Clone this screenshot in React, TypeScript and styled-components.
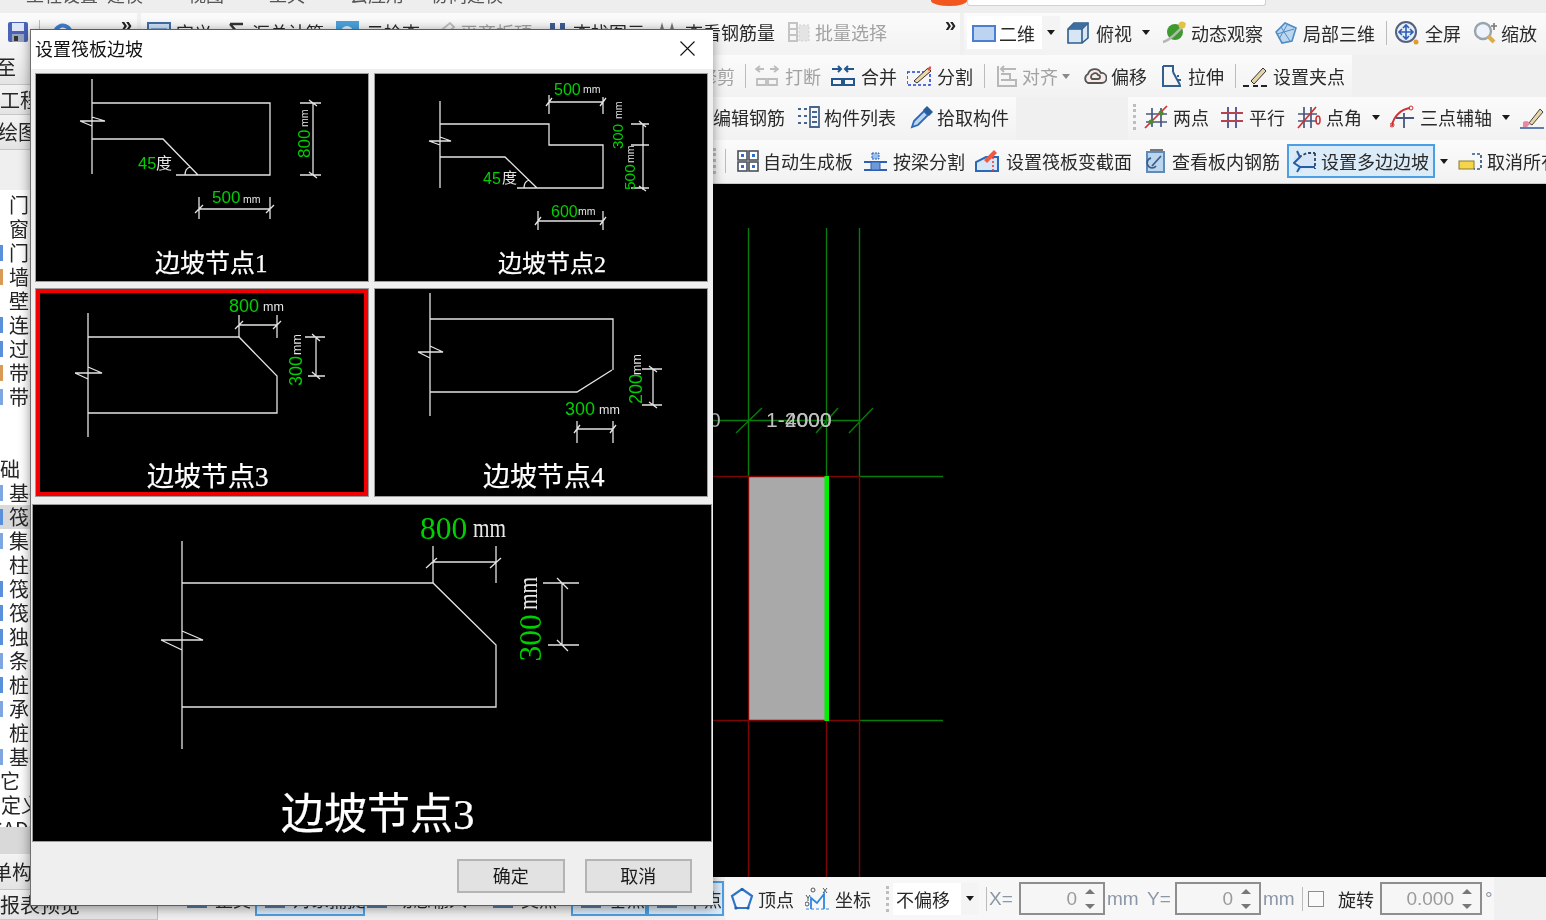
import React from "react";
import styled, { createGlobalStyle, css } from "styled-components";

const Global = createGlobalStyle`
  html, body { margin: 0; padding: 0; background: #f0f0f0; overflow: hidden; }
  * { box-sizing: border-box; }
`;

const CJK = `"Noto Sans CJK SC", "Liberation Sans", sans-serif`;
const SERIF = `"Liberation Serif", "Noto Sans CJK SC", serif`;
const SANS = `"Liberation Sans", "Noto Sans CJK SC", sans-serif`;

const Shell = styled.div`
  position: relative;
  width: 1546px;
  height: 920px;
  overflow: hidden;
  background: #f0f0f0;
  font-family: ${CJK};
  font-size: 18px;
  color: #262626;
  display: grid;
  grid-template-rows: 13px 42px 865px;
  filter: blur(0.35px);
`;

const TopStrip = styled.div`
  display: flex;
  align-items: flex-start;
  overflow: hidden;
  background: #eeeeee;
  padding-left: 26px;
`;
const Menu = styled.span`
  width: 81px;
  line-height: 18px;
  margin-top: -15px;
  color: #555;
  flex: none;
`;
const Blob = styled.div`
  flex: none;
  width: 36px;
  height: 6px;
  margin-left: auto;
  background: #f0561d;
  border-radius: 0 0 20px 22px / 0 0 6px 6px;
`;
const Search = styled.div`
  flex: none;
  width: 299px;
  height: 6px;
  margin-right: 284px;
  background: #fff;
  border: 1px solid #c5d3e6;
  border-top: 0;
  border-radius: 0 0 3px 3px;
`;

const TopBar = styled.div`
  display: flex;
  background: #f0f0f0;
`;
const Group = styled.div<{ $w?: number; $pl?: number; $ml?: number; $pb?: number }>`
  display: flex;
  align-items: center;
  height: 100%;
  flex: none;
  ${(p) => (p.$w ? `width: ${p.$w}px;` : "")}
  padding-left: ${(p) => p.$pl ?? 0}px;
  padding-bottom: ${(p) => p.$pb ?? 0}px;
  margin-left: ${(p) => p.$ml ?? 0}px;
  background: linear-gradient(#fbfbfb, #f2f2f2);
  white-space: nowrap;
`;

const Body = styled.div`
  display: grid;
  grid-template-columns: 158px 1388px;
  min-height: 0;
`;

/* ---------- sidebar ---------- */
const Sidebar = styled.aside`
  display: flex;
  flex-direction: column;
  background: #ececec;
  border-right: 1px solid #bdbdbd;
  overflow: hidden;
`;
const NavRow = styled.div<{ $h: number; $indent?: number; $pb?: number }>`
  height: ${(p) => p.$h}px;
  flex: none;
  padding-bottom: ${(p) => p.$pb ?? 0}px;
  line-height: ${(p) => p.$h - (p.$pb ?? 0) - 1}px;
  text-indent: ${(p) => p.$indent ?? 0}px;
  border-bottom: 1px solid #c6c6c6;
  background: linear-gradient(#f3f3f3, #e4e4e4);
  white-space: nowrap;
  font-size: 20px;
`;
const GapBand = styled.div<{ $h: number; $dark?: boolean }>`
  height: ${(p) => p.$h}px;
  flex: none;
  background: ${(p) => (p.$dark ? "#d9d9d9" : "#efefef")};
`;
const TreeList = styled.div`
  height: 637px;
  flex: none;
  padding-top: 3px;
  background: #fff;
  overflow: hidden;
`;
const TreeRow = styled.div<{ $sel?: boolean; $head?: boolean; $tip?: string }>`
  height: 24px;
  display: flex;
  align-items: center;
  white-space: nowrap;
  font-size: 20px;
  line-height: 24px;
  padding-left: ${(p) => (p.$head ? 0 : 9)}px;
  background: ${(p) => (p.$sel ? "#d9d9d9" : "transparent")};
  ${(p) =>
    p.$tip
      ? `background-image: linear-gradient(${p.$tip}, ${p.$tip}); background-size: 3px 16px; background-position: 0 4px; background-repeat: no-repeat;`
      : ""}
`;
const HeadLabel = styled.span<{ $shift: number }>`
  margin-left: ${(p) => p.$shift}px;
`;

/* ---------- toolbars ---------- */
const Main = styled.main`
  display: grid;
  grid-template-rows: 42px 43px 44px 693px 43px;
  min-width: 0;
  overflow: hidden;
`;
const ToolRow = styled.div<{ $pl?: number; $line?: boolean }>`
  display: flex;
  align-items: center;
  overflow: hidden;
  ${(p) => (p.$line ? "border-bottom: 1px solid #c9c9c9;" : "")}
`;
const Tool = styled.div<{ $w?: number; $iw?: number; $off?: boolean }>`
  display: flex;
  flex: none;
  align-items: center;
  width: ${(p) => p.$w ?? 80}px;
  height: 100%;
  white-space: nowrap;
  color: ${(p) => (p.$off ? "#a2a2a2" : "#2a2a2a")};
  & > svg { flex: none; width: 24px; height: 24px; margin-right: ${(p) => (p.$iw ?? 30) - 24}px; }
`;
const ActiveTool = styled(Tool)`
  height: 34px;
  border: 2px solid #4b9fe4;
  background: #dcebf8;
  padding-left: 4px;
`;
const StatusActive = styled(Tool)`
  height: 35px;
  border: 2px solid #4b9fe4;
  background: #dcebf8;
  padding-left: 6px;
`;
const Caret = styled.i<{ $ml?: number; $soft?: boolean }>`
  flex: none;
  width: 0;
  height: 0;
  margin-left: ${(p) => p.$ml ?? 10}px;
  border-left: 4.5px solid transparent;
  border-right: 4.5px solid transparent;
  border-top: 5px solid ${(p) => (p.$soft ? "#8a8a8a" : "#1a1a1a")};
`;
const Sep = styled.i<{ $ml?: number; $mr?: number }>`
  flex: none;
  width: 1px;
  height: 24px;
  background: #bcbcbc;
  margin-left: ${(p) => p.$ml ?? 0}px;
  margin-right: ${(p) => p.$mr ?? 0}px;
`;
const Grip = styled.i<{ $ml?: number; $mr?: number }>`
  flex: none;
  width: 3px;
  height: 26px;
  border-left: 3px dotted #bdbdbd;
  margin-left: ${(p) => p.$ml ?? 0}px;
  margin-right: ${(p) => p.$mr ?? 0}px;
`;
const More = styled.span<{ $ml?: number }>`
  font-family: ${SANS};
  font-weight: 700;
  font-size: 20px;
  line-height: 14px;
  align-self: flex-start;
  margin-top: 4px;
  margin-left: ${(p) => p.$ml ?? 0}px;
  color: #222;
`;
const WhiteBox = styled.div`
  display: flex;
  align-items: center;
  height: 33px;
  padding-left: 5px;
  margin-right: 6px;
  background: #fff;
`;
const CaretCell = styled.div`
  width: 18px;
  height: 100%;
  display: flex;
  align-items: center;
  justify-content: center;
  background: #f4f4f4;
  & > i { margin-left: 0; }
`;

/* ---------- canvas ---------- */
const CanvasWrap = styled.section`
  background: #000;
  overflow: hidden;
  min-height: 0;
`;
const CanvasSvg = styled.svg`
  display: block;
  width: 100%;
  height: 100%;
`;
const CanvasText = styled.text`
  font-family: ${SANS};
  font-size: 21px;
  fill: #c0c0c0;
`;

/* ---------- status bar ---------- */
const StatusBar = styled.footer`
  display: flex;
  align-items: center;
  padding-left: 27px;
  background: #f0f0f0;
  overflow: hidden;
`;
const StatusGroup = styled.div`
  display: flex;
  align-items: center;
  height: 100%;
  background: #f7f7f7;
  padding-left: 5px;
  margin-left: 1px;
`;
const SelectBox = styled.div`
  display: flex;
  align-items: center;
  width: 86px;
  height: 32px;
  margin: 0 7px 0 2px;
  padding-left: 3px;
  background: #fff;
  white-space: nowrap;
`;
const SelectText = styled.span`
  flex: 1;
`;
const FieldLabel = styled.span<{ $w: number; $pl?: number }>`
  flex: none;
  width: ${(p) => p.$w}px;
  padding-left: ${(p) => p.$pl ?? 0}px;
  font-family: ${SANS};
  font-size: 19px;
  color: #8b97a6;
  white-space: nowrap;
`;
const Field = styled.div<{ $w: number }>`
  flex: none;
  display: flex;
  align-items: center;
  justify-content: flex-end;
  width: ${(p) => p.$w}px;
  height: 33px;
  border: 2px solid #8e8e8e;
  background: #f6f6f6;
  font-family: ${SANS};
  font-size: 19px;
  color: #9a9a9a;
`;
const Spin = styled.div`
  flex: none;
  width: 26px;
  height: 100%;
  display: flex;
  flex-direction: column;
  justify-content: space-between;
  align-items: center;
  padding: 5px 0 4px;
`;
const SpinArrow = styled.i<{ $down?: boolean }>`
  width: 0;
  height: 0;
  border-left: 5px solid transparent;
  border-right: 5px solid transparent;
  ${(p) =>
    p.$down
      ? css`border-top: 5px solid #777;`
      : css`border-bottom: 5px solid #777;`}
`;
const Check = styled.i`
  flex: none;
  width: 16px;
  height: 16px;
  border: 1px solid #8e8e8e;
  background: #fafafa;
  margin-right: 14px;
`;
const PlainLabel = styled.span<{ $w: number }>`
  flex: none;
  width: ${(p) => p.$w}px;
`;

/* ---------- dialog ---------- */
const Dialog = styled.div`
  position: absolute;
  left: 30px;
  top: 29px;
  width: 683px;
  height: 877px;
  display: flex;
  flex-direction: column;
  background: #efefef;
  border-top: 1px solid #5c5c5c;
  border-left: 1px solid #6f6f6f;
  border-bottom: 1px solid #5c5c5c;
  box-shadow: 0 2px 11px rgba(0, 0, 0, 0.42);
`;
const DialogTitle = styled.div`
  height: 39px;
  flex: none;
  display: flex;
  align-items: center;
  justify-content: space-between;
  padding: 0 18px 4px 4px;
  background: #fff;
  color: #111;
  font-size: 18px;
`;
const CloseIcon = styled.svg`
  width: 15px;
  height: 15px;
  margin-top: 2px;
`;
const ThumbGrid = styled.div`
  display: grid;
  grid-template-columns: 334px 334px;
  grid-template-rows: 209px 209px;
  column-gap: 5px;
  row-gap: 6px;
  margin: 4px 0 0 4px;
`;
const Frame = styled.div`
  border: 1px solid #9c9c9c;
  background: #000;
`;
const PreviewFrame = styled(Frame)`
  width: 680px;
  height: 338px;
  flex: none;
  margin: 7px 0 0 1px;
`;
const Drawing = styled.svg<{ $sel?: boolean }>`
  display: block;
  width: 100%;
  height: 100%;
  background: #000;
  ${(p) => (p.$sel ? "outline: 4px solid #f00000; outline-offset: -4px;" : "")}
`;
const Footer = styled.div`
  flex: 1;
  display: flex;
  justify-content: flex-end;
  align-items: flex-start;
  gap: 20px;
  padding: 17px 21px 0 0;
`;
const DlgButton = styled.button`
  width: 107.5px;
  height: 34px;
  padding: 0 0 2px;
  border: 2px solid #b4b4b4;
  background: #e2e2e2;
  font: 18px ${CJK};
  color: #1a1a1a;
`;
const Green = styled.text<{ $s: number; $serif?: boolean }>`
  font-family: ${(p) => (p.$serif ? SERIF : SANS)};
  font-size: ${(p) => p.$s}px;
  fill: #00d000;
`;
const Unit = styled.text<{ $s: number; $serif?: boolean }>`
  font-family: ${(p) => (p.$serif ? SERIF : SANS)};
  font-size: ${(p) => p.$s}px;
  fill: #e6e6e6;
`;
const Title = styled.text<{ $s: number }>`
  font-family: ${SERIF};
  font-size: ${(p) => p.$s}px;
  fill: #fff;
  stroke: #fff;
  stroke-width: 0.25;
`;
const Ink = styled.path`
  fill: none;
  stroke: #e4e4e4;
  stroke-width: 1.3;
`;

/* ---------- icons ---------- */
type IconName =
  | "save" | "undo" | "def" | "sum" | "cloudbox" | "pen" | "find" | "rebar" | "batch" | "rect" | "cube"
  | "orbit" | "hex" | "fit" | "zoom" | "break" | "merge" | "split" | "align" | "cloud" | "stretch"
  | "pencil" | "list" | "picker" | "two" | "par" | "ang" | "arc" | "brush" | "grid" | "beam" | "sec"
  | "view" | "poly" | "cancel" | "pent" | "coord" | "dim";

const icons: Record<IconName, React.ReactNode> = {
  save: <><rect x="2" y="2" width="20" height="20" rx="2" fill="#4a62b8" /><rect x="6" y="3" width="12" height="8" fill="#dfe6f5" /><rect x="6" y="14" width="12" height="8" fill="#9aa4bd" /><rect x="8" y="16" width="4" height="5" fill="#333" /></>,
  undo: <path d="M5 12a8 8 0 1 1 3 8" fill="none" stroke="#3f7fd0" strokeWidth="4" />,
  def: <><rect x="1" y="3" width="22" height="18" fill="#cfe0f3" stroke="#3f6ea8" strokeWidth="2" /><path d="M4 9h16M4 14h16" stroke="#3f6ea8" /></>,
  sum: <path d="M5 4h13M5 4l7 8-7 8h13" fill="none" stroke="#333" strokeWidth="2.4" />,
  cloudbox: <><rect x="1" y="1" width="23" height="22" fill="#4aa3dd" /><circle cx="12" cy="12" r="6" fill="#dff0fb" /></>,
  pen: <path d="M3 20l3-7L18 3l4 4L10 18z" fill="none" stroke="#c0c0c0" strokeWidth="2" />,
  find: <><circle cx="7" cy="15" r="5" fill="#5d7fb8" /><circle cx="17" cy="15" r="5" fill="#5d7fb8" /><rect x="5" y="3" width="5" height="9" fill="#3d5d98" /><rect x="15" y="3" width="5" height="9" fill="#3d5d98" /></>,
  rebar: <path d="M3 20l4-14 4 14M13 20l4-14 4 14" fill="none" stroke="#777" strokeWidth="2" />,
  batch: <><path d="M2 3h8v18H2zM2 9h8M2 15h8" fill="none" stroke="#c4c4c4" strokeWidth="2" /><path d="M12 5h10v16H12z" fill="#e4e4e4" stroke="#cfcfcf" strokeDasharray="2 2" /></>,
  rect: <><rect x="1" y="5" width="22" height="15" fill="#bcd3f2" stroke="#4a80cf" strokeWidth="2" /></>,
  cube: <><path d="M2 8l6-6h14v15l-6 5H2z" fill="#d7e6f5" stroke="#2f5c8a" strokeWidth="1.6" /><path d="M2 8h14v14M16 8l6-6" fill="none" stroke="#2f5c8a" strokeWidth="1.6" /><path d="M2 8l6-6h14l-6 6z" fill="#3f6e9e" /></>,
  orbit: <><circle cx="13" cy="11" r="8" fill="#3c9a2e" /><path d="M1 21C6 20 17 11 23 2" stroke="#b5b5b5" strokeWidth="2.5" fill="none" /><circle cx="20" cy="4" r="3.5" fill="#e3c244" /></>,
  hex: <><path d="M2 11l9-9 11 5-4 13-10 2z" fill="#bcd6f0" stroke="#4f8bc4" strokeWidth="1.6" /><path d="M7 6l9 14M13 4l-8 14M3 13l17-5" stroke="#4f8bc4" fill="none" /></>,
  fit: <><circle cx="11" cy="11" r="10" fill="#e8eefa" stroke="#54627d" strokeWidth="2" /><path d="M11 4v14M4 11h14M8 7l3-3 3 3M8 15l3 3 3-3M7 8l-3 3 3 3M15 8l3 3-3 3" stroke="#2c5fb5" strokeWidth="1.6" fill="none" /><circle cx="21" cy="21" r="2.5" fill="#e59a2f" /></>,
  zoom: <><circle cx="10" cy="10" r="8" fill="#eef3fb" stroke="#9aa4ad" strokeWidth="2.4" /><path d="M15 15l6 6" stroke="#d6ad55" strokeWidth="4" /><path d="M21 2v7M18 5h6" stroke="#777" strokeWidth="1.6" /></>,
  break: <path d="M1 5h8M5 2L1 5l4 3M23 5h-8M19 2l4 3-4 3M2 15h9v6H2zM13 15h9v6h-9z" fill="none" stroke="#bdbdbd" strokeWidth="1.8" />,
  merge: <path d="M1 5h9M7 2l3 3-3 3M23 5h-9M17 2l-3 3 3 3M1 15h10v6H1zM13 15h10v6H13z" fill="none" stroke="#23568f" strokeWidth="2" />,
  split: <><path d="M0 8h23v13H0z" fill="none" stroke="#2541d6" strokeWidth="1.6" strokeDasharray="3 2" /><path d="M7 17l14-13 3 3L10 19z" fill="#f0d9a8" stroke="#333" /><path d="M20 5l3-3 2 2-3 3z" fill="#d9534f" /></>,
  align: <path d="M3 2v20h18v-6H6M6 5h15M9 2L6 5l3 3M6 10h9v5" fill="none" stroke="#b8b8b8" strokeWidth="2" />,
  cloud: <path d="M5 19a5 5 0 0 1 0-9 7 7 0 0 1 13-1 5 5 0 0 1 1 10zM9 15a3 3 0 0 1 1-5 3 3 0 0 1 5 1 2 2 0 0 1 0 4z" fill="#f8ebe8" stroke="#555" strokeWidth="1.8" />,
  stretch: <path d="M4 2h10v6M4 2v20h18M14 8l7 13M18 12h2M19 16h3" fill="none" stroke="#325f92" strokeWidth="2" />,
  pencil: <><path d="M8 17L20 4l3 3L11 20z" fill="#e7d5a8" stroke="#333" /><path d="M0 22h6M10 22h5M18 22h6" stroke="#222" strokeWidth="2" /></>,
  list: <path d="M2 4h3M2 11h3M2 18h3M8 4h3M8 11h3M8 18h3M14 2h9v20h-9zM16 7h5M16 12h5M16 17h5" fill="none" stroke="#47658a" strokeWidth="1.8" />,
  picker: <><path d="M2 22l2-6L14 6l4 4L8 20z" fill="#b8d5f3" stroke="#2d68b8" strokeWidth="1.8" /><path d="M13 5l4-4 6 6-4 4z" fill="#2b5d9a" /></>,
  two: <><path d="M8 3v19M17 3v19M2 9h21M2 17h21" stroke="#47577e" strokeWidth="1.7" /><path d="M1 23L23 1" stroke="#d03030" strokeWidth="1.7" /><circle cx="7" cy="17" r="2.5" fill="#4a8a30" /><circle cx="17" cy="8" r="2.5" fill="#4a8a30" /></>,
  par: <><path d="M8 2v21M16 2v21" stroke="#5a5f9c" strokeWidth="2" fill="none" /><path d="M1 8h22M1 16h22" stroke="#b8434f" strokeWidth="2" fill="none" /></>,
  ang: <><path d="M7 2v21M14 2v21M1 9h19M1 16h19" stroke="#47577e" strokeWidth="1.7" /><path d="M1 23L19 2" stroke="#d03030" strokeWidth="1.7" /><ellipse cx="21" cy="15" rx="2" ry="4" fill="none" stroke="#d03030" strokeWidth="1.6" /></>,
  arc: <><path d="M2 21C3 12 11 4 20 3" fill="none" stroke="#d03030" strokeWidth="1.8" /><path d="M14 8v15M6 13h18" stroke="#47577e" strokeWidth="1.8" /><circle cx="21" cy="3" r="2" fill="none" stroke="#d03030" /><circle cx="2" cy="20" r="2" fill="none" stroke="#d03030" /></>,
  brush: <><path d="M9 18L20 4l3 3-11 13z" fill="#e7d5a8" stroke="#444" /><path d="M3 17c3-2 6-1 7 2l-3 3H3z" fill="#e58aa5" /><path d="M0 23h24" stroke="#3c5f9c" strokeWidth="1.6" /></>,
  grid: <><rect x="2" y="2" width="9" height="9" fill="#fff" stroke="#4a4f5a" strokeWidth="1.6" /><rect x="13" y="2" width="9" height="9" fill="#fff" stroke="#4a4f5a" strokeWidth="1.6" /><rect x="2" y="13" width="9" height="9" fill="#fff" stroke="#4a4f5a" strokeWidth="1.6" /><rect x="13" y="13" width="9" height="9" fill="#fff" stroke="#4a4f5a" strokeWidth="1.6" /><path d="M5 5h3v3H5zM16 5h3v3h-3zM5 16h3v3H5zM16 16h3v3h-3z" fill="#2f6fc9" /></>,
  beam: <><path d="M9 4h7v6H9z" fill="#9cc0ea" stroke="#2c5fb5" strokeDasharray="2 1" /><path d="M1 13h23M1 21h23" stroke="#2c5fb5" strokeWidth="2" /><rect x="8" y="13" width="9" height="8" fill="#6f9ad8" stroke="#2c5fb5" /></>,
  sec: <><path d="M1 22V13l10-5h12v14z" fill="#d7e7f7" stroke="#2c68b8" strokeWidth="2" /><path d="M9 11L19 1l3 3-10 10z" fill="#ef5a44" /><path d="M18 8v15" stroke="#e33" strokeDasharray="2 2" strokeWidth="1.5" /></>,
  view: <><path d="M4 3h17v20H4z" fill="#bcd5ee" stroke="#5f8bb6" strokeWidth="2" /><path d="M7 1h13" stroke="#777" strokeWidth="2" /><path d="M9 17l9-10M8 9a5 5 0 1 0 5 8" fill="none" stroke="#3a5f8a" strokeWidth="1.8" /></>,
  poly: <><path d="M4 3l2 5 16-4v16H8l2 4-8-4 4-6-6-4z" fill="#d5e5f6" /><path d="M6 8l8-4h8M22 4v16" fill="none" stroke="#30445f" strokeWidth="1.8" strokeDasharray="3 2" /><path d="M4 2l3 6-6 6 6 4-3 5M7 18h15" fill="none" stroke="#225ea8" strokeWidth="2" /></>,
  cancel: <><rect x="1" y="12" width="15" height="8" fill="#f5d54b" stroke="#8a7a2a" /><path d="M14 5h9v15h-7" fill="none" stroke="#30557f" strokeWidth="1.7" strokeDasharray="3 2" /></>,
  pent: <><path d="M12 2l10 7-4 12H6L2 9z" fill="#f4f8fd" stroke="#2f74c5" strokeWidth="2.2" /><circle cx="12" cy="2.5" r="1.6" fill="#1f5fae" /><circle cx="6" cy="21" r="1.6" fill="#1f5fae" /><circle cx="18" cy="21" r="1.6" fill="#1f5fae" /></>,
  coord: <><path d="M6 22V11l6 5 7-9v15" fill="none" stroke="#2d86e0" strokeWidth="1.8" /><path d="M1 22h23" stroke="#2d86e0" strokeDasharray="3 2" /><circle cx="8" cy="3" r="2" fill="none" stroke="#555" /><circle cx="2" cy="17" r="2" fill="none" stroke="#555" /><path d="M18 1l4 5M22 1l-4 5M1 8l2 3 2-3M3 11v3" stroke="#555" fill="none" /></>,
  dim: <path d="M3 4h18v16H3z" fill="none" stroke="#5f7ea3" strokeWidth="2" />,
};

const Icon = ({ name }: { name: IconName }) => <svg viewBox="0 0 24 24">{icons[name]}</svg>;

type T = { n: IconName; l?: string; w: number; iw: number; off?: boolean; caret?: boolean; softCaret?: boolean };
const renderTool = (t: T, i: number) => (
  <Tool key={i} $w={t.w} $iw={t.iw} $off={t.off}>
    <Icon name={t.n} />
    {t.l && <span>{t.l}</span>}
    {t.caret && <Caret />}
    {t.softCaret && <Caret $ml={4} $soft />}
  </Tool>
);

const row1a: T[] = [
  { n: "def", l: "定义", w: 78, iw: 29 },
  { n: "sum", l: "汇总计算", w: 110, iw: 27 },
  { n: "cloudbox", l: "云检查", w: 97, iw: 31 },
  { n: "pen", l: "平齐板顶", w: 113, iw: 28, off: true },
  { n: "find", l: "查找图元", w: 110, iw: 28 },
  { n: "rebar", l: "查看钢筋量", w: 132, iw: 30 },
  { n: "batch", l: "批量选择", w: 101, iw: 28, off: true },
];
const row1b: T[] = [
  { n: "cube", l: "俯视", w: 96, iw: 30, caret: true },
  { n: "orbit", l: "动态观察", w: 112, iw: 29 },
  { n: "hex", l: "局部三维", w: 112, iw: 29 },
];
const row1c: T[] = [
  { n: "fit", l: "全屏", w: 78, iw: 30 },
  { n: "zoom", l: "缩放", w: 72, iw: 28 },
];
const row2a: T[] = [
  { n: "dim", l: "删除", w: 99, iw: 30 },
  { n: "dim", l: "复制", w: 99, iw: 30 },
  { n: "dim", l: "移动", w: 99, iw: 30 },
  { n: "dim", l: "旋转", w: 99, iw: 30 },
  { n: "dim", l: "延伸", w: 99, iw: 30 },
  { n: "dim", l: "修剪", w: 76, iw: 30, off: true },
];
const row3a: T[] = [
  { n: "dim", l: "属性", w: 102, iw: 30 },
  { n: "dim", l: "图元", w: 102, iw: 30 },
  { n: "dim", l: "楼层", w: 102, iw: 30 },
  { n: "dim", l: "定义", w: 102, iw: 30 },
  { n: "dim", l: "绘制", w: 102, iw: 30 },
  { n: "dim", l: "编辑钢筋", w: 113, iw: 30 },
  { n: "list", l: "构件列表", w: 114, iw: 28 },
  { n: "picker", l: "拾取构件", w: 106, iw: 27 },
];
const row3b: T[] = [
  { n: "two", l: "两点", w: 76, iw: 29 },
  { n: "par", l: "平行", w: 77, iw: 29 },
  { n: "ang", l: "点角", w: 93, iw: 29, caret: true },
  { n: "arc", l: "三点辅轴", w: 130, iw: 30, caret: true },
  { n: "brush", w: 26, iw: 26 },
];
const row4a: T[] = [
  { n: "dim", l: "直线", w: 108, iw: 30 },
  { n: "dim", l: "点", w: 108, iw: 30 },
  { n: "dim", l: "矩形", w: 108, iw: 30 },
  { n: "dim", l: "智能布置", w: 108, iw: 30 },
  { n: "dim", l: "镜像", w: 108, iw: 30 },
];
const row4b: T[] = [
  { n: "grid", l: "自动生成板", w: 127, iw: 27 },
  { n: "beam", l: "按梁分割", w: 112, iw: 30 },
  { n: "sec", l: "设置筏板变截面", w: 168, iw: 31 },
  { n: "view", l: "查看板内钢筋", w: 144, iw: 29 },
];

const tree: { t: string; tip?: string; sel?: boolean; head?: number }[] = [
  { t: "门" }, { t: "窗" }, { t: "门联窗", tip: "#5a8fdc" }, { t: "墙洞", tip: "#d89a55" }, { t: "壁龛" },
  { t: "连梁", tip: "#5a8fdc" }, { t: "过梁", tip: "#5a8fdc" }, { t: "带形洞", tip: "#d89a55" }, { t: "带形窗", tip: "#7fa6e0" },
  { t: " " }, { t: " " },
  { t: "基础", head: -20 },
  { t: "基础梁", tip: "#7fa6e0" }, { t: "筏板基础", tip: "#5a8fdc", sel: true }, { t: "集水坑", tip: "#7fa6e0" },
  { t: "柱墩" }, { t: "筏板主筋", tip: "#5a8fdc" }, { t: "筏板负筋", tip: "#5a8fdc" }, { t: "独立基础", tip: "#5a8fdc" },
  { t: "条形基础", tip: "#7fa6e0" }, { t: "桩承台", tip: "#5a8fdc" }, { t: "承台梁", tip: "#7fa6e0" }, { t: "桩" },
  { t: "基础板带", tip: "#7fa6e0" },
  { t: "其它", head: -20 },
  { t: "自定义", head: -19 },
  { t: "CAD识别", head: -10 },
];

const Diagram1 = () => (
  <Drawing viewBox="36 74 332 207">
    <Ink d="M92 79V174M92 103H270V175H176M92 139H163L198 175M80 121H105L92 117M80 121L92 126M185 175C185 171 187 168 190 167" />
    <Ink d="M300 103H321M300 175H321M313 103V175M309 100L317 106M309 172L317 178M199 197V219M270 197V219M199 209H270M195 213L203 205M266 213L274 205" />
    <Green $s={16.5} x={138} y={169}>45</Green>
    <Unit $s={16} x={156} y={169} fontFamily={CJK}>度</Unit>
    <Green $s={17} x={212} y={203}>500</Green>
    <Unit $s={10.5} x={243} y={203}>mm</Unit>
    <Green $s={17} transform="translate(310 158) rotate(-90)">800</Green>
    <Unit $s={10.5} transform="translate(308 127) rotate(-90)">mm</Unit>
    <Title $s={25} x={155} y={272}>边坡节点1</Title>
  </Drawing>
);
const Diagram2 = () => (
  <Drawing viewBox="375 74 332 207">
    <Ink d="M440 101V188M440 124H549V145H603V188H517M440 157H505L537 188M429 141H451L440 137M429 141L440 145M524 188C524 184 526 181 529 180" />
    <Ink d="M549 95V114M603 97V114M549 102H603M546 106L552 98M600 106L606 98M631 124H649M631 145H649M631 188H649M643 124V190M639 121L646 127M639 186L646 191M538 211V230M603 211V230M538 221H603M535 225L541 217M600 225L606 217" />
    <Green $s={16} x={483} y={184}>45</Green>
    <Unit $s={15} x={502} y={183} fontFamily={CJK}>度</Unit>
    <Green $s={16} x={554} y={95}>500</Green>
    <Unit $s={10.5} x={583} y={93}>mm</Unit>
    <Green $s={16} x={551} y={217}>600</Green>
    <Unit $s={10.5} x={578} y={215}>mm</Unit>
    <Green $s={15} transform="translate(623 149) rotate(-90)">300</Green>
    <Unit $s={10.5} transform="translate(622 119) rotate(-90)">mm</Unit>
    <Green $s={15.5} transform="translate(635 190) rotate(-90)">500</Green>
    <Unit $s={10.5} transform="translate(634 163) rotate(-90)">mm</Unit>
    <Title $s={24} x={498} y={272}>边坡节点2</Title>
  </Drawing>
);
const Diagram3 = () => (
  <Drawing viewBox="36 289 332 207" $sel>
    <Ink d="M88 313V437M88 337H239L277 376V413H88M75 373H102L88 367M75 373L88 379" />
    <Ink d="M239 315V337M277 315V338M239 325H277M235 329L243 321M273 329L281 321M305 337H325M308 376H325M316 337V376M312 334L320 341M312 372L320 379" />
    <Green $s={18} x={229} y={312}>800</Green>
    <Unit $s={12.5} x={263} y={311}>mm</Unit>
    <Green $s={18} transform="translate(302 386) rotate(-90)">300</Green>
    <Unit $s={12.5} transform="translate(301 355) rotate(-90)">mm</Unit>
    <Title $s={27} x={147} y={486}>边坡节点3</Title>
  </Drawing>
);
const Diagram4 = () => (
  <Drawing viewBox="375 289 332 207">
    <Ink d="M430 293V416M430 319H613V370M612 370L577 392H430M418 352H443L430 346M418 352L430 358" />
    <Ink d="M642 369H662M642 405H662M653 369V405M649 366L657 372M649 402L657 408M577 421V443M613 421V443M577 429H613M574 433L580 425M610 433L616 425" />
    <Green $s={18} x={565} y={415}>300</Green>
    <Unit $s={12.5} x={599} y={414}>mm</Unit>
    <Green $s={18} transform="translate(642 404) rotate(-90)">200</Green>
    <Unit $s={12.5} transform="translate(641 375) rotate(-90)">mm</Unit>
    <Title $s={27} x={483} y={486}>边坡节点4</Title>
  </Drawing>
);
const Preview = () => (
  <Drawing viewBox="33 505 678 336">
    <Ink d="M182 541V749M182 583H433L496 645V707H182M161 640H203L182 631M161 640L182 650" />
    <Ink d="M433 546V583M496 546V583M433 562H496M426 568L437 558M490 568L501 558M543 583H579M548 645H579M562 583V645M557 578L568 589M557 640L568 651" />
    <Green $s={31.5} $serif x={420} y={539}>800</Green>
    <Unit $s={28} $serif x={473} y={537} textLength={33} lengthAdjust="spacingAndGlyphs">mm</Unit>
    <Green $s={31.5} $serif transform="translate(541 661.5) rotate(-90)">300</Green>
    <Unit $s={28} $serif transform="translate(537 610) rotate(-90)" textLength={33} lengthAdjust="spacingAndGlyphs">mm</Unit>
    <Title $s={43} x={281} y={829}>边坡节点3</Title>
  </Drawing>
);

const SpinBox = () => (
  <Spin>
    <SpinArrow />
    <SpinArrow $down />
  </Spin>
);

export default function App() {
  return (
    <>
      <Global />
      <Shell>
        <TopStrip>
          <Menu>工程设置</Menu>
          <Menu>建模</Menu>
          <Menu>视图</Menu>
          <Menu>工具</Menu>
          <Menu>云应用</Menu>
          <Menu>协同建模</Menu>
          <Blob />
          <Search />
        </TopStrip>

        <TopBar>
          <Group $w={137} $pl={6} $pb={4}>
            <Tool $w={33} $iw={24}><Icon name="save" /></Tool>
            <Sep $mr={10} />
            <Tool $w={71} $iw={24}><Icon name="undo" /></Tool>
            <More>»</More>
          </Group>
          <Group $w={819} $ml={4} $pl={6} $pb={4}>
            {row1a.map(renderTool)}
            <More $ml={57}>»</More>
          </Group>
          <Group $w={586} $ml={4} $pl={3} $pb={3}>
            <WhiteBox>
              <Tool $w={70} $iw={27}><Icon name="rect" /><span>二维</span></Tool>
              <CaretCell><Caret /></CaretCell>
            </WhiteBox>
            {row1b.map(renderTool)}
            <Sep $mr={8} />
            {row1c.map(renderTool)}
          </Group>
        </TopBar>

        <Body>
          <Sidebar>
            <NavRow $h={30} $indent={-4} $pb={5}>至</NavRow>
            <NavRow $h={30}>工程设置</NavRow>
            <NavRow $h={35} $indent={-2}>绘图输入</NavRow>
            <GapBand $h={40} />
            <TreeList>
              {tree.map((r, i) => (
                <TreeRow key={i} $sel={r.sel} $tip={r.tip} $head={r.head !== undefined}>
                  {r.head !== undefined ? <HeadLabel $shift={r.head}>{r.t}</HeadLabel> : r.t}
                </TreeRow>
              ))}
            </TreeList>
            <GapBand $h={27} $dark />
            <NavRow $h={36} $indent={-8}>单构件输入</NavRow>
            <NavRow $h={30}>报表预览</NavRow>
          </Sidebar>

          <Main>
            <ToolRow>
              <Group $pl={16}>
                {row2a.map(renderTool)}
                <Sep $mr={9} />
                {renderTool({ n: "break", l: "打断", w: 76, iw: 30, off: true }, 1)}
                {renderTool({ n: "merge", l: "合并", w: 76, iw: 30 }, 2)}
                {renderTool({ n: "split", l: "分割", w: 77, iw: 30 }, 3)}
                <Sep $mr={10} />
                {renderTool({ n: "align", l: "对齐", w: 88, iw: 27, off: true, softCaret: true }, 4)}
                {renderTool({ n: "cloud", l: "偏移", w: 76, iw: 28 }, 5)}
                {renderTool({ n: "stretch", l: "拉伸", w: 76, iw: 29 }, 6)}
                <Sep $mr={7} />
                {renderTool({ n: "pencil", l: "设置夹点", w: 109, iw: 30 }, 7)}
              </Group>
            </ToolRow>

            <ToolRow>
              <Group $pl={15} $pb={3}>{row3a.map(renderTool)}</Group>
              <Group $ml={112} $w={418} $pl={5} $pb={3}>
                <Grip $mr={8} />
                {row3b.map(renderTool)}
              </Group>
            </ToolRow>

            <ToolRow $line>
              <Group $w={1388} $pl={14} $pb={1}>
                {row4a.map(renderTool)}
                <Grip $ml={1} $mr={9} />
                <Sep $mr={10} />
                {row4b.map(renderTool)}
                <ActiveTool $w={148} $iw={28}>
                  <Icon name="poly" />
                  <span>设置多边边坡</span>
                </ActiveTool>
                <Tool $w={23} $iw={0}><Caret $ml={5} /></Tool>
                {renderTool({ n: "cancel", l: "取消所有图元", w: 140, iw: 29 }, 9)}
              </Group>
            </ToolRow>

            <CanvasWrap>
              <CanvasSvg viewBox="158 184 1388 693">
                <path d="M748.5 228V476M826.5 228V476M859.5 228V476M700 420.5H860M736 433L762 408M816 433L838 408M849 433L873 408M860 476.5H943M860 720.5H943" stroke="#087c08" strokeWidth="1.4" fill="none" />
                <rect x="749" y="476" width="78" height="244" fill="#a9a9a9" />
                <path d="M700 476.5H860M700 720.5H860M748.5 476V877M826.5 720V877M859.5 476V877" stroke="#7d0505" strokeWidth="1.4" fill="none" />
                <rect x="824.5" y="476" width="4.5" height="245" fill="#00f000" />
                <CanvasText x={709} y={427}>0</CanvasText>
                <CanvasText x={766} y={427}>1-2000</CanvasText>
                <CanvasText x={785} y={427}>4000</CanvasText>
              </CanvasSvg>
            </CanvasWrap>

            <StatusBar>
              {renderTool({ n: "dim", l: "正交", w: 70, iw: 30 }, 1)}
              <StatusActive $w={110} $iw={30}><Icon name="dim" /><span>对象捕捉</span></StatusActive>
              {renderTool({ n: "dim", l: "动态输入", w: 126, iw: 30 }, 2)}
              {renderTool({ n: "dim", l: "交点", w: 80, iw: 30 }, 3)}
              <StatusActive $w={76} $iw={30}><Icon name="dim" /><span>垂点</span></StatusActive>
              <StatusActive $w={77} $iw={31}><Icon name="dim" /><span>中点</span></StatusActive>
              <StatusGroup>
                <Tool $w={75} $iw={28}><Icon name="pent" /><span>顶点</span></Tool>
                {renderTool({ n: "coord", l: "坐标", w: 81, iw: 30 }, 4)}
                <Grip $mr={2} />
                <SelectBox>
                  <SelectText>不偏移</SelectText>
                  <CaretCell><Caret /></CaretCell>
                </SelectBox>
                <Sep $mr={2} />
                <FieldLabel $w={30}>X=</FieldLabel>
                <Field $w={86}>0<SpinBox /></Field>
                <FieldLabel $w={40} $pl={2}>mm</FieldLabel>
                <FieldLabel $w={30} $pl={2}>Y=</FieldLabel>
                <Field $w={86}>0<SpinBox /></Field>
                <FieldLabel $w={41} $pl={2}>mm</FieldLabel>
                <Sep $mr={5} />
                <Check />
                <PlainLabel $w={42}>旋转</PlainLabel>
                <Field $w={102}>0.000<SpinBox /></Field>
                <FieldLabel $w={12} $pl={3}>°</FieldLabel>
              </StatusGroup>
            </StatusBar>
          </Main>
        </Body>

        <Dialog>
          <DialogTitle>
            <span>设置筏板边坡</span>
            <CloseIcon viewBox="0 0 15 15">
              <path d="M0.5 0.5L14.5 14.5M14.5 0.5L0.5 14.5" stroke="#111" strokeWidth="1.1" />
            </CloseIcon>
          </DialogTitle>
          <ThumbGrid>
            <Frame><Diagram1 /></Frame>
            <Frame><Diagram2 /></Frame>
            <Frame><Diagram3 /></Frame>
            <Frame><Diagram4 /></Frame>
          </ThumbGrid>
          <PreviewFrame><Preview /></PreviewFrame>
          <Footer>
            <DlgButton>确定</DlgButton>
            <DlgButton>取消</DlgButton>
          </Footer>
        </Dialog>
      </Shell>
    </>
  );
}
